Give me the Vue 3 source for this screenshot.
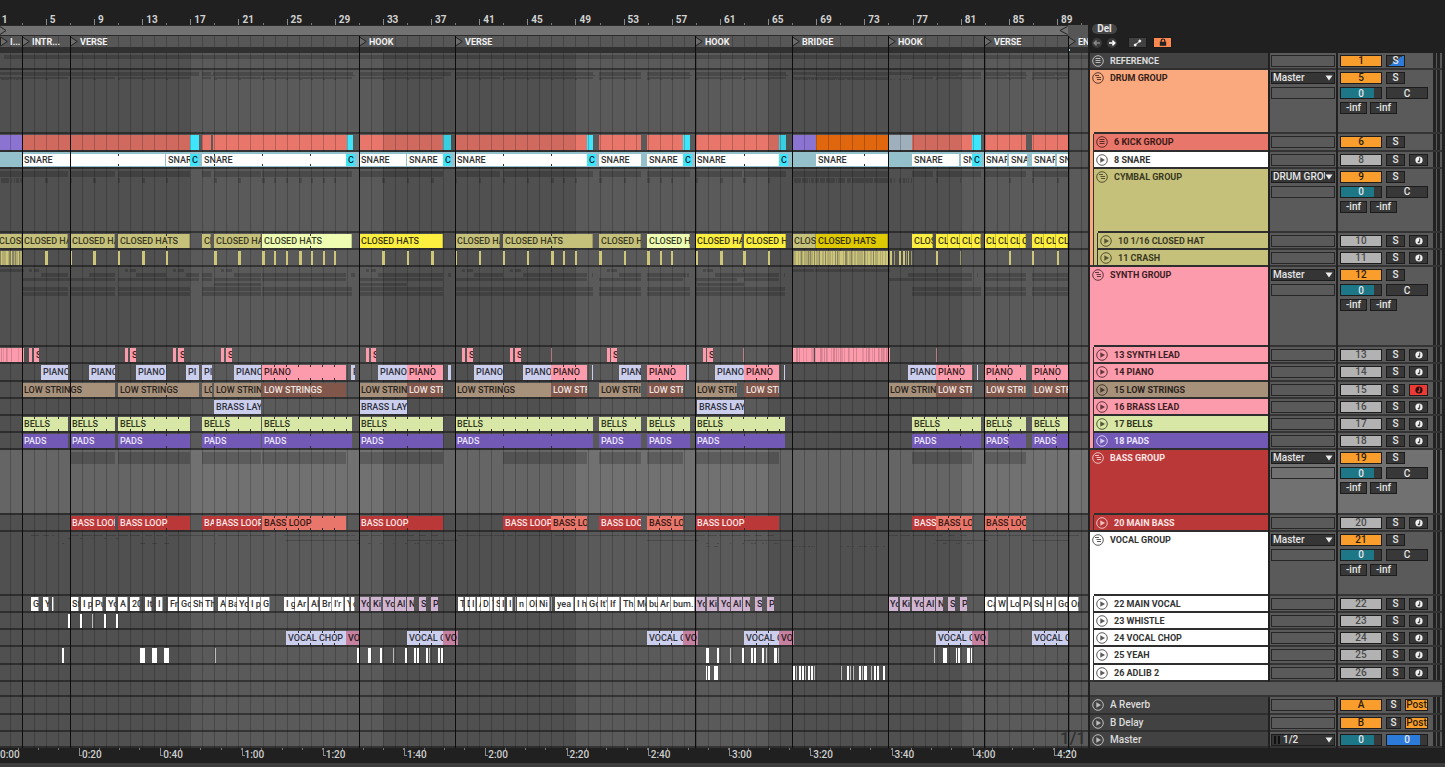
<script setup>
import { ref } from 'vue'

const SPAN = 1088
const BAR = 12.037
const FIRST_BAR = -2.3

const pct = (x) => `${(x / SPAN) * 100}%`
const barX = (n) => FIRST_BAR + (n - 1) * BAR

const gridLines = Array.from({ length: 90 }, (_, i) => barX(i + 2))
const shades = [[0, 190], [382.8, 575.4], [768, 960.6]]
const barNumbers = Array.from({ length: 23 }, (_, i) => 1 + i * 4)
const halfTicks = Array.from({ length: 23 }, (_, i) => barX(3 + i * 4))
const locators = [
  { x: 0, name: 'I...' }, { x: 22, name: 'INTR...' }, { x: 70, name: 'VERSE' },
  { x: 359, name: 'HOOK' }, { x: 455, name: 'VERSE' }, { x: 695, name: 'HOOK' },
  { x: 792, name: 'BRIDGE' }, { x: 888, name: 'HOOK' }, { x: 984, name: 'VERSE' },
  { x: 1068, name: 'EN' },
]
const cuts = locators.slice(1).map((l) => l.x)
const times = ['0:20', '0:40', '1:00', '1:20', '1:40', '2:00', '2:20', '2:40', '3:00', '3:20', '3:40', '4:00', '4:20']
  .map((t, i) => ({ t, x: 79 + i * 81.25 }))
const smallTicks = Array.from({ length: 53 }, (_, i) => 17.6 + i * 20.3)

/* clip helpers: each lane is a list of { a, b, text, tone, marks } */
const LETTER = 5.2
const fit = (text, width) => text.slice(0, Math.max(1, Math.ceil((width - 3) / LETTER)))
const clip = (a, b, tone, text = '', marks = []) => ({
  a, b, tone, text: tone.includes('edge') ? text : fit(text, b - a),
  marks: marks === 'bars'
    ? Array.from({ length: Math.floor((b - a - 3) / BAR) }, (_, i) => a + (i + 1) * BAR)
    : marks,
})
const ticks = (tone, list) => list.map((p) => (Array.isArray(p) ? clip(p[0], p[1], tone) : clip(p, p + 1, `${tone} dim`)))
const noise = (i) => { const v = Math.sin(i * 12.9898) * 43758.5453; return v - Math.floor(v) }
const dense = (a, b, tone, keep) => {
  const out = []
  for (let x = a; x < b; x += 1) {
    const n = noise(x + 1)
    if (n < keep) out.push(clip(x, x + 1, n < keep * 0.45 ? tone : `${tone} dim`))
  }
  return out
}

const kick = [
  clip(0, 22, 'violet'), clip(22, 190, 'coral'), clip(190, 199, 'cyan'), clip(202, 211, 'coral'), clip(213, 347, 'coral'),
  clip(347, 353, 'cyan'), clip(359, 443, 'coral'), clip(443, 451, 'cyan'), clip(455, 587, 'coral'), clip(587, 593, 'cyan'),
  clip(599, 641, 'coral'), clip(647, 683, 'coral'), clip(683, 690, 'cyan'), clip(695, 779, 'coral'), clip(779, 786, 'cyan'),
  clip(792, 816, 'violet'), clip(816, 888, 'orange'), clip(888, 912, 'steel'), clip(912, 972, 'coral'), clip(972, 981, 'cyan'),
  clip(984, 1026, 'coral'), clip(1032, 1068, 'coral'),
]
const snare = [
  ...[[22, 165, [118]], [166, 190], [202, 346, [214, 262, 310]], [359, 406], [407, 443], [455, 587, [503, 551]], [599, 641],
    [647, 683], [695, 779, [744]], [816, 888, [864]], [912, 959], [961, 972], [984, 1007], [1009, 1027], [1032, 1055], [1057, 1068]]
    .map(([a, b, m]) => clip(a, b, 'white', 'SNARE', m)),
  ...[[190, 199], [346, 355], [443, 451], [587, 596], [683, 692], [779, 788], [972, 981]].map(([a, b]) => clip(a, b, 'cyan', 'C')),
]
const hats = [
  [-3, 22, 'olive'], [22, 68, 'olive'], [70, 115, 'olive'], [118, 190, 'olive', [166]], [202, 211, 'olive'], [214, 261, 'olive'],
  [262, 352, 'pale', [310]], [359, 443, 'yellow'], [455, 500, 'olive'], [503, 593, 'olive', [551]], [599, 641, 'olive'],
  [647, 690, 'pale'], [695, 742, 'yellow'], [744, 786, 'yellow'], [792, 816, 'olive'], [816, 888, 'gold'], [912, 933, 'yellow'],
  [936, 948, 'yellow'], [948, 960, 'yellow'], [960, 972, 'yellow'], [972, 981, 'yellow'], [984, 996, 'yellow'], [996, 1008, 'yellow'],
  [1008, 1020, 'yellow'], [1020, 1026, 'yellow'], [1032, 1044, 'yellow'], [1044, 1056, 'yellow'], [1056, 1068, 'yellow'],
].map(([a, b, t, m]) => clip(a, b, `${t} seam`, 'CLOSED HATS', m))
const crash = [
  clip(0, 22, 'straw faint'), ...dense(0, 22, 'straw', 0.75),
  ...[45, 93, 142, 214, 238, 262, 299, 382, 431, 551, 599, 647, 695, 720, 743].map((x) => clip(x, x + 3, 'straw')),
  ...[70, 118, 166, 274, 286, 311, 323, 334, 407, 455, 479, 503, 527, 563, 575, 624, 660, 671, 768, 936, 1009, 1032, 1057].map((x) => clip(x, x + 2, 'straw')),
  clip(792, 888, 'straw faint'), ...dense(792, 888, 'straw', 0.75),
  ...ticks('straw', [[890, 892], 894, [899, 901], [903, 905], 906, [908, 909], 911, 960, 984]),
]
const lead = [
  clip(0, 22, 'pink'), ...dense(0, 22, 'rose', 0.4), clip(23, 24, 'pink'),
  ...[[29, 34, 39], [125, 130, 136], [173, 178, 184], [221, 226, 232], [366, 371, 376], [462, 467, 473], [510, 515, 521], [607, 611, 617], [703, 707, 713]]
    .flatMap(([a, b, e]) => [clip(a, a + 3, 'pink'), clip(b, e, 'pink', 'S')]),
  ...ticks('pink', [551, 743, 936]),
  clip(792, 814, 'pink'), ...dense(792, 814, 'rose', 0.4), clip(815, 888, 'pink'), ...dense(815, 888, 'rose', 0.4), clip(888, 890, 'pink'),
]
const piano = [
  ...[[41, 68], [89, 115], [136, 166], [186, 199], [202, 212], [234, 261], [351, 355], [378, 407], [474, 503], [523, 551], [619, 641], [715, 744], [908, 936]]
    .map(([a, b]) => clip(a, b, 'lavender', 'PIANO')),
  ...[[448, 451], [592, 593], [687, 689], [784, 785], [977, 978]].map(([a, b]) => clip(a, b, 'lavender')),
  ...[[262, 346], [407, 443], [551, 587], [647, 686], [744, 779], [936, 972], [984, 1026], [1032, 1068]].map(([a, b]) => clip(a, b, 'pink', 'PIANO', 'bars')),
]
const strings = [
  ...[[22, 115], [118, 199, [166]], [202, 212], [214, 261], [359, 407], [455, 551, [503]], [599, 641], [695, 737], [888, 936]]
    .map(([a, b, m]) => clip(a, b, 'tan', 'LOW STRINGS', m)),
  ...[[262, 346, [310]], [407, 443], [551, 587], [647, 683], [744, 779], [936, 972], [984, 1026], [1032, 1068]]
    .map(([a, b, m]) => clip(a, b, 'brown', 'LOW STRINGS', m)),
]
const brass = [[214, 261], [359, 407], [697, 744]].map(([a, b]) => clip(a, b, 'lavender', 'BRASS LAYER'))
const held = [
  [22, 68], [70, 115], [118, 190, [166]], [202, 261, [214]], [262, 352, [310]], [359, 443, [407]], [455, 593, [503, 551]],
  [599, 641], [647, 690], [695, 785, [744]], [912, 981, [960]], [984, 1026, [1008]], [1032, 1068, [1056]],
]
const bells = held.map(([a, b]) => clip(a, b, 'lime', 'BELLS', 'bars'))
const pads = held.map(([a, b, m]) => clip(a, b, 'purple', 'PADS', m))
const bass = [
  ...[[70, 115], [118, 190, [166]], [202, 214], [214, 261], [359, 443, [407]], [503, 551], [599, 641], [695, 779, [744]], [912, 936]]
    .map(([a, b, m]) => clip(a, b, 'red', 'BASS LOOP', m)),
  ...[[262, 346], [551, 587], [647, 683], [936, 972], [984, 1026]].map(([a, b]) => clip(a, b, 'coral', 'BASS LOOP', 'bars')),
]
const vocal = [
  ...[[31, 39, 'G'], [43, 49, 'Y'], [52, 54, ''], [70, 79, 'St'], [81, 92, 'I p'], [93, 103, 'Pu'], [106, 116, 'Yo'], [118, 128, 'A'], [130, 140, '20'],
    [145, 152, 'It'], [156, 163, 'I'], [168, 178, 'Fr'], [179, 191, 'Go'], [191, 203, 'Sh'], [203, 214, 'Th'], [218, 226, 'A'], [226, 237, 'Ba'],
    [237, 248, 'Yo'], [249, 261, 'I p'], [261, 270, 'G'], [284, 295, 'I g'], [295, 308, 'Ar'], [309, 319, 'Al'], [320, 332, 'Br'], [332, 344, "I'r"],
    [345, 350, 'Y'], [351, 355, 'c'], [458, 464, 'T'], [465, 470, 'D'], [470, 476, 'I'], [477, 481, 'A'], [481, 490, 'D'], [490, 493, 'T'], [494, 500, 'S'],
    [500, 505, 'I'], [507, 513, 'I'], [515, 516, ''], [517, 527, 'n'], [527, 537, 'Ok'], [537, 550, 'Ni'], [551, 552, ''], [555, 574, 'yea'],
    [575, 587, 'I h'], [587, 598, 'Go'], [598, 608, "It'"], [608, 620, 'If'], [621, 635, 'Th'], [635, 646, 'Mo'], [647, 658, 'bu'], [658, 671, 'Ar'],
    [671, 695, 'bum.'], [985, 995, 'Ca'], [996, 1007, 'W'], [1008, 1020, 'Lo'], [1021, 1031, 'Po'], [1032, 1043, 'Su'], [1044, 1055, 'H'],
    [1056, 1068, 'Go'], [1069, 1079, 'Or']].map(([a, b, t]) => clip(a, b, 'white edge', t)),
  ...[359, 695, 888].flatMap((s) => [[0, 10, 'Yo'], [12, 22, 'Ki'], [24, 35, 'Yo'], [36, 47, 'Al'], [48, 55, 'N'], [60, 67, 'S'], [72, 79, 'P']]
    .map(([a, b, t]) => clip(s + a, s + b, 'lilac', t))),
]
const whistle = ticks('white', [[68, 70], [80, 82], 92, [104, 106], [116, 118]])
const chop = [
  ...[[286, 346], [407, 443], [647, 683], [744, 779], [936, 972], [1032, 1068]].map(([a, b]) => clip(a, b, 'lavender', 'VOCAL CHOP', 'bars')),
  ...[[346, 359], [443, 458], [683, 698], [779, 794], [972, 988]].map(([a, b]) => clip(a, b, 'mauve', 'VO')),
]
const yeah = ticks('white', [
  [62, 64], [140, 145], [152, 157], [164, 169], 215, [357, 359], [368, 371], [380, 382], 393, [405, 407], [414, 416], [417, 419],
  [426, 428], 429, [438, 440], [441, 443], [706, 709], [717, 719], 730, [742, 744], [751, 753], [754, 756], [762, 764], 766,
  [774, 777], 778, 934, [943, 947], [956, 957], [958, 960], [967, 970], [971, 972],
])
const adlib = ticks('white', [
  [706, 707], [708, 710], [714, 718], [793, 795], 796, [799, 801], [802, 804], 805, [808, 810], [811, 813], 814, 841, [847, 849], 850,
  853, [859, 861], 862, [864, 867], 871, [874, 876], [877, 879], [883, 885],
])

/* miniature of the child clips shown inside a folded group lane */
const mini = (list, y, h) => list.map((c) => ({ a: c.a, b: c.b, y, h }))
const crashMini = crash.filter((c) => !c.tone.includes('faint'))
const drumMini = [...mini(kick, 2, 3), ...mini(snare, 5, 1), ...mini(hats, 7, 2), ...mini(crashMini, 9, 1)]
const cymbalMini = [...mini(hats, 2, 6), ...mini(crashMini, 9, 5)]
const synthMini = [
  ...mini(lead.filter((c) => !c.tone.includes('rose')), 2, 3), ...mini(piano, 6, 4), ...mini(strings, 11, 3),
  ...mini(brass, 16, 3), ...mini(bells, 20, 4), ...mini(pads, 25, 4),
]
const bassMini = mini(bass, 2, 12)
const vocalMini = [...mini(vocal, 3, 1), ...mini(whistle, 6, 1), ...mini(chop, 8, 1), ...mini(yeah, 11, 1), ...mini(adlib, 14, 1)]

const tracks = ref([
  { n: '1', name: 'REFERENCE', kind: 'group', icon: 'bars', tone: 'slate', on: true, cue: true, mini: [{ a: 4, b: 1088, y: 2, h: 4 }] },
  { n: '5', name: 'DRUM GROUP', kind: 'group', icon: 'fold', tone: 'peach', size: 'tall', on: true, out: 'Master', mini: drumMini },
  { n: '6', name: '6 KICK GROUP', kind: 'group', icon: 'bars', tone: 'coral', on: true, strips: ['peach'], clips: kick, under: true },
  { n: '8', name: '8 SNARE', icon: 'play', tone: 'white', strips: ['peach'], clips: snare, bed: true },
  { n: '9', name: 'CYMBAL GROUP', kind: 'group', icon: 'fold', tone: 'olive', size: 'tall', on: true, out: 'DRUM GROUP', strips: ['peach'], mini: cymbalMini },
  { n: '10', name: '10 1/16 CLOSED HAT', icon: 'play', tone: 'olive', strips: ['peach', 'olive'], clips: hats },
  { n: '11', name: '11 CRASH', icon: 'play', tone: 'olive', strips: ['peach', 'olive'], last: true, clips: crash },
  { n: '12', name: 'SYNTH GROUP', kind: 'group', icon: 'fold', tone: 'pink', size: 'taller', on: true, out: 'Master', mini: synthMini },
  { n: '13', name: '13 SYNTH LEAD', icon: 'play', tone: 'pink', strips: ['pink'], clips: lead },
  { n: '14', name: '14 PIANO', icon: 'play', tone: 'pink', strips: ['pink'], clips: piano },
  { n: '15', name: '15 LOW STRINGS', icon: 'play', tone: 'tan', strips: ['pink'], clips: strings, armed: true },
  { n: '16', name: '16 BRASS LEAD', icon: 'play', tone: 'pink', strips: ['pink'], clips: brass },
  { n: '17', name: '17 BELLS', icon: 'play', tone: 'lime', strips: ['pink'], clips: bells },
  { n: '18', name: '18 PADS', icon: 'play', tone: 'purple', strips: ['pink'], last: true, clips: pads },
  { n: '19', name: 'BASS GROUP', kind: 'group', icon: 'fold', tone: 'red', size: 'tall', on: true, out: 'Master', mini: bassMini, selected: true },
  { n: '20', name: '20 MAIN BASS', icon: 'play', tone: 'red', strips: ['red'], last: true, clips: bass },
  { n: '21', name: 'VOCAL GROUP', kind: 'group', icon: 'fold', tone: 'white', size: 'tall', on: true, out: 'Master', mini: vocalMini },
  { n: '22', name: '22 MAIN VOCAL', icon: 'play', tone: 'white', strips: ['white'], clips: vocal },
  { n: '23', name: '23 WHISTLE', icon: 'play', tone: 'white', strips: ['white'], clips: whistle },
  { n: '24', name: '24 VOCAL CHOP', icon: 'play', tone: 'white', strips: ['white'], clips: chop },
  { n: '25', name: '25 YEAH', icon: 'play', tone: 'white', strips: ['white'], clips: yeah },
  { n: '26', name: '26 ADLIB 2', icon: 'play', tone: 'white', strips: ['white'], last: true, clips: adlib },
  { kind: 'blank', size: 'short' },
  { n: 'A', name: 'A Reverb', kind: 'return', icon: 'play', tone: 'slate', on: true },
  { n: 'B', name: 'B Delay', kind: 'return', icon: 'play', tone: 'slate', on: true },
  { name: 'Master', kind: 'master', icon: 'play', tone: 'slate', size: 'main', out: '1/2' },
])
</script>

<template>
  <main class="live">
    <header class="top">
      <div class="rulers">
        <div class="bars-ruler">
          <span v-for="n in barNumbers" :key="n" class="bar-no" :style="{ left: pct(barX(n)) }">{{ n }}</span>
          <i v-for="x in halfTicks" :key="x" class="half" :style="{ left: pct(x) }"></i>
        </div>
        <div class="loop">
          <div class="brace" :style="{ width: pct(1068) }">
            <svg width="7" height="9" viewBox="0 0 7 9"><path d="M0 .5 6 4.5 0 8.5" /></svg>
            <svg width="9" height="9" viewBox="0 0 9 9"><path d="M8.5 .5 1 4.5 8.5 8.5" /></svg>
          </div>
        </div>
        <div class="locators">
          <i v-for="x in gridLines" :key="x" class="line" :style="{ left: pct(x) }"></i>
          <div v-for="l in locators" :key="l.x" class="locator" :style="{ left: pct(l.x) }">
            <svg width="8" height="11" viewBox="0 0 8 11"><path d="M.5 1 7.3 5.5 .5 10Z" /></svg>
            <span>{{ l.name }}</span>
          </div>
        </div>
        <div class="scrub"><i class="dot" :style="{ left: pct(1068) }"></i></div>
      </div>
      <div class="tools">
        <button class="pill">Del</button>
        <div class="tool-row">
          <button class="round off" aria-label="Previous locator">
            <svg width="10" height="10" viewBox="0 0 10 10"><path d="M8 5H2.4M4.6 2.6 2.2 5l2.4 2.4" /></svg>
          </button>
          <button class="round" aria-label="Next locator">
            <svg width="10" height="10" viewBox="0 0 10 10"><path d="M2 5h5.6M5.4 2.6 7.8 5 5.4 7.4" /></svg>
          </button>
          <button class="square" aria-label="Automation mode">
            <svg width="9" height="8" viewBox="0 0 9 8"><path d="M2 6 7 2" /><circle cx="2.2" cy="6" r="1" /><circle cx="6.8" cy="2" r="1" /></svg>
          </button>
          <button class="square lock" aria-label="Lock envelopes">
            <svg width="8" height="9" viewBox="0 0 8 9"><path class="shackle" d="M2.2 4V2.8a1.8 1.8 0 0 1 3.6 0V4" /><rect x=".8" y="3.8" width="6.4" height="4" /></svg>
          </button>
        </div>
      </div>
    </header>

    <section class="tracks">
      <div class="field">
        <i v-for="s in shades" :key="s[0]" class="shade" :style="{ left: pct(s[0]), width: pct(s[1] - s[0]) }"></i>
        <i v-for="x in gridLines" :key="x" class="line" :style="{ left: pct(x) }"></i>
      </div>
      <div class="cuts">
        <i v-for="x in cuts" :key="x" :style="{ left: pct(x) }"></i>
        <span class="zoom">1/1</span>
      </div>

      <div v-for="(t, i) in tracks" :key="i" class="track" :class="[t.size || 'normal', t.kind || 'plain', { selected: t.selected }]">
        <div class="lane">
          <div v-if="t.bed" class="bed" :style="{ width: pct(1068) }"></div>
          <i v-for="(m, k) in t.mini || []" :key="'m' + k" class="mini"
            :style="{ left: pct(m.a), width: pct(m.b - m.a), top: m.y + 'px', height: m.h + 'px' }"></i>
          <div v-for="(c, k) in t.clips || []" :key="k" class="clip" :class="[c.tone, { under: t.under, inset: t.bed }]"
            :style="{ left: pct(c.a), width: pct(c.b - c.a) }">
            <span v-if="c.text">{{ c.text }}</span>
            <i v-for="m in c.marks" :key="m" class="mark" :style="{ left: ((m - c.a) / (c.b - c.a)) * 100 + '%' }"></i>
          </div>
        </div>

        <div v-if="t.kind === 'blank'" class="filler"></div>
        <template v-else>
          <div class="head">
            <i v-for="(s, k) in t.strips || []" :key="k" class="strip" :class="[s, { last: t.last }]"></i>
            <div class="title" :class="[t.tone, { open: t.icon === 'fold' }]">
              <svg class="glyph" width="12" height="12" viewBox="0 0 12 12">
                <circle cx="6" cy="6" r="5.3" />
                <path v-if="t.icon === 'play'" class="solid" d="M4.3 3.3 9 6 4.3 8.7Z" />
                <path v-else-if="t.icon === 'bars'" d="M3.5 3.5h5M3.5 5.5h5M3.5 7.5h5" />
                <path v-else d="M3 3.5h4M4.5 5.5h4.5M5 7.5h4" />
              </svg>
              <h2>{{ t.name }}</h2>
            </div>
          </div>

          <div class="io">
            <div v-if="t.out" class="pick">
              <i v-if="t.kind === 'master'" class="pins"></i>
              <select :aria-label="t.name + ' output'"><option>{{ t.out }}</option></select>
              <svg width="8" height="6" viewBox="0 0 8 6"><path d="M.5 .5h7L4 5.5Z" /></svg>
            </div>
            <div v-else class="slot"></div>
            <div v-if="t.out && t.kind !== 'master'" class="slot"></div>
          </div>

          <div class="mix">
            <div class="controls">
              <div v-if="t.kind === 'master'" class="line-row">
                <input class="vol" value="0" aria-label="Master volume">
                <input class="wide cueing" value="0" aria-label="Cue volume">
              </div>
              <div v-else class="line-row">
                <button class="act" :class="{ on: t.on }">{{ t.n }}</button>
                <button class="solo" :class="{ cue: t.cue, slim: t.kind === 'return' }">S</button>
                <button v-if="t.kind === 'return'" class="post">Post</button>
                <button v-else-if="!t.kind" class="arm" :class="{ armed: t.armed }" :aria-label="'Arm ' + t.name">
                  <svg width="8" height="8" viewBox="0 0 8 8"><circle cx="4" cy="4" r="3.6" /><path d="M4.7 1.6v3.6" /><ellipse cx="3.8" cy="5.4" rx="1.1" ry=".9" /></svg>
                </button>
              </div>
              <template v-if="t.out && t.kind !== 'master'">
                <div class="line-row">
                  <input class="vol" value="0" :aria-label="t.name + ' volume'">
                  <input class="wide" value="C" :aria-label="t.name + ' pan'">
                </div>
                <div class="line-row sends">
                  <button class="send">-inf</button>
                  <button class="send">-inf</button>
                </div>
              </template>
            </div>
            <div class="meter"><i></i><i></i></div>
          </div>
        </template>
      </div>
    </section>

    <footer class="time">
      <div class="time-ruler">
        <span class="zero">0:00</span>
        <i v-for="x in smallTicks" :key="x" class="small" :style="{ left: pct(x) }"></i>
        <span v-for="m in times" :key="m.t" class="stamp" :style="{ left: pct(m.x) }">{{ m.t }}</span>
        <i class="dot" :style="{ left: pct(1068) }"></i>
      </div>
    </footer>
  </main>
</template>

<style>
body { background: #202020; }
</style>

<style scoped>
* { box-sizing: border-box; }
.live {
  --line: #343434;
  display: flex;
  flex-direction: column;
  min-height: 100vh;
  background: #202020;
  border-bottom: 4px solid #3d3d3d;
  color: #dedede;
  font: 500 10px/12px Roboto, "Liberation Sans", sans-serif;
  overflow: hidden;
}
button, input, select {
  margin: 0;
  padding: 0;
  border: 1px solid #1c1c1c;
  border-radius: 0;
  background: #383838;
  color: #e6e6e6;
  font: inherit;
  line-height: 10px;
  text-align: center;
  height: 12px;
}
i { display: block; }

.top, .track, .time { display: grid; grid-template-columns: minmax(0, 1fr) 357px; }
.rulers { overflow: hidden; }
.bars-ruler { position: relative; height: 25px; }
.bar-no {
  position: absolute;
  bottom: 0;
  height: 6px;
  padding-left: 3px;
  border-left: 1px solid #8a8a8a;
  line-height: 2px;
  font-size: 10px;
  font-weight: 700;
  color: #d2d2d2;
}
.half { position: absolute; bottom: 0; width: 1px; height: 2px; background: #777; }
.loop { height: 11px; background: #565656; }
.brace {
  display: flex;
  justify-content: space-between;
  align-items: center;
  height: 11px;
  background: #727272;
  border: solid #2a2a2a;
  border-width: 1px 0;
}
.brace svg, .locator svg { display: block; fill: none; stroke: #222; stroke-width: 1; }
.locators { position: relative; height: 11px; background: #575757; }
.locator {
  position: absolute;
  top: 0;
  display: flex;
  gap: 2px;
  height: 11px;
  white-space: nowrap;
  line-height: 12px;
  font-size: 9px;
  font-weight: 700;
  color: #f0f0f0;
}
.locator svg { fill: #6c6c6c; }
.scrub { position: relative; height: 6px; background: #303030; }
.dot { position: absolute; top: 2px; width: 2px; height: 2px; background: #9fe4f5; }

.tools { padding: 24px 0 0 4px; }
.pill { display: block; width: 25px; height: 10px; border: 0; border-radius: 5px; background: #454545; font-weight: 700; }
.tool-row { display: flex; align-items: center; margin-top: 3px; }
.round { width: 10px; height: 10px; border: 0; border-radius: 50%; background: #3a3a3a; margin-right: 5px; }
.square { display: grid; place-items: center; width: 19px; height: 11px; margin-left: 6px; background: #414141; }
.square svg { fill: #fff; stroke: #fff; }
.round svg { display: block; fill: none; stroke: #fff; stroke-width: 1.5; }
.round.off svg { stroke: #888; }
.lock { background: #fd8850; }
.lock svg { fill: #222; stroke: none; }
.lock .shackle { fill: none; stroke: #222; stroke-width: 1.2; }

.tracks { position: relative; display: flex; flex-direction: column; flex: 1; }
.field, .cuts { position: absolute; top: 0; bottom: 0; left: 0; right: 357px; overflow: hidden; pointer-events: none; }
.field { z-index: 1; }
.cuts { z-index: 3; top: -17px; }
.cuts i { position: absolute; top: 0; bottom: 0; width: 1px; background: #0c0c0c; }
.zoom { position: absolute; right: 2px; bottom: 2px; font-size: 17px; line-height: 16px; color: #303030; }
.line { position: absolute; top: 0; bottom: 0; width: 1px; background: rgba(0, 0, 0, .2); }
.shade { position: absolute; top: 0; bottom: 0; background: rgba(0, 0, 0, .1); }

.track { flex: 172 1 0; }
.track.tall { flex-grow: 644; }
.track.taller { flex-grow: 800; }
.track.short { flex-grow: 156; }
.track.main { flex-grow: 164; }
.lane { position: relative; background: #5a5a5a; border-bottom: 2px solid var(--line); overflow: hidden; }
.bed { position: absolute; z-index: 2; inset: 0 auto 0 0; background: #93c0ca; }
.mini { position: absolute; background: rgba(0, 0, 0, .18); }
.clip {
  position: absolute;
  z-index: 2;
  top: 1px;
  bottom: 0;
  display: flex;
  align-items: center;
  overflow: hidden;
  white-space: nowrap;
  font-size: 9px;
  font-weight: 500;
}
.clip.inset { top: 2px; bottom: 1px; }
.clip.under { z-index: 0; }
.clip span { padding-left: 2px; }
.mark { position: absolute; top: 0; bottom: 0; width: 1px; border: solid #2c2c2c; border-width: 2px 0; }
.edge { box-shadow: inset -1px 0 #9a9a9a; }
.seam { box-shadow: inset -1px 0 rgba(0, 0, 0, .2); }
.dim { opacity: .6; }
.faint { opacity: .45; }

.white { background: #fff; color: #333; }
.coral { background: #e8766a; color: #3a1a17; }
.cyan { background: #3fe6fb; color: #123; }
.violet { background: #9b80ea; }
.orange { background: #fa730f; }
.steel { background: #b1c3d2; }
.olive { background: #c5c17b; color: #3a3822; }
.pale { background: #eefdb2; color: #3a3d28; }
.yellow { background: #fdef40; color: #3a3714; }
.gold { background: #dfc900; color: #33300a; }
.straw { background: #cec679; }
.pink { background: #fb9bab; color: #3d1e25; }
.rose { background: #d3808f; }
.lavender { background: #cbcfed; color: #30313c; }
.tan { background: #a7917b; color: #2a231c; }
.brown { background: #80574a; color: #f0e6e2; }
.lime { background: #d9e7a6; color: #303520; }
.purple { background: #7259b6; color: #ebe4fb; }
.red { background: #bb3838; color: #fbe6e6; }
.lilac { background: #cfb5d2; color: #2b222d; }
.mauve { background: #c5819f; color: #2e1b24; }
.peach { background: #faa87e; color: #33211a; }
.slate { background: #424242; color: #dcdcdc; }

.track > .head { display: flex; }
.track:not(.blank) { grid-template-columns: minmax(0, 1fr) 178px 66px 104px; column-gap: 2px; padding-right: 3px; }
.track.blank { padding-right: 3px; column-gap: 2px; grid-template-columns: minmax(0, 1fr) 352px; }
.lane, .head, .io, .mix, .filler { min-width: 0; }
.io, .mix, .filler { background: #5a5a5a; border-bottom: 2px solid var(--line); }
.selected .lane, .selected .io, .selected .mix { background: #717171; }
.head { background: var(--line); }
.strip { width: 4px; border-right: 1px solid #333; }
.strip.last { border-bottom: 2px solid #333; }
.title { position: relative; flex: 1; display: flex; align-items: flex-start; gap: 6px; padding: 2px 0 0 2px; }
.title::after { content: ""; position: absolute; left: 0; right: 0; bottom: 0; height: 2px; background: #2e2e2e; }
.title.open::after { left: 4px; }
.title h2 { margin: 0; font-size: 9px; line-height: 12px; font-weight: 700; white-space: nowrap; }
.return h2, .master h2 { font-size: 10px; font-weight: 500; }
.glyph { display: block; flex: none; fill: none; stroke: currentColor; stroke-width: 1; opacity: .8; }
.glyph .solid { fill: currentColor; stroke: none; }

.io { display: flex; flex-direction: column; gap: 3px; padding: 2px 1px 0; }
.slot { height: 12px; border: 1px solid #262626; }
.pick { position: relative; display: flex; height: 12px; border: 1px solid #1c1c1c; background: #353535; }
.pick select { flex: 1; min-width: 0; height: 10px; padding-left: 1px; border: 0; background: none; appearance: none; text-align: left; overflow: hidden; }
.pick svg { flex: none; width: 8px; margin: 2px 1px 0 0; fill: #eee; }
.pins { width: 6px; margin: 1px 2px; border: solid #111; border-width: 0 2px; }

.mix { display: flex; justify-content: space-between; padding: 0 2px; }
.controls { display: flex; flex-direction: column; gap: 3px; padding-top: 2px; }
.line-row { display: flex; gap: 4px; }
.sends { gap: 3px; }
.act { width: 42px; background: #b2b2b2; color: #4a4a4a; }
.act.on { background: #f99d2c; color: #2a1c08; }
.solo, .arm { width: 19px; }
.solo.slim { width: 15px; }
.solo.cue { background: linear-gradient(145deg, #383838 50%, #2d7bd8 50%); }
.arm { display: grid; place-items: center; }
.arm svg { fill: #f2f2f2; }
.arm path { stroke: #333; stroke-width: 1; }
.arm ellipse { fill: #333; }
.arm.armed { background: #ee3a35; }
.arm.armed svg { fill: #2a1010; }
.arm.armed path { stroke: #ee3a35; }
.arm.armed ellipse { fill: #ee3a35; }
.post { width: 23px; background: #f99d2c; color: #2a1c08; }
.vol { width: 42px; background: linear-gradient(90deg, #1e7787 83%, #383838 83%); }
.wide { width: 42px; }
.cueing { background: linear-gradient(90deg, #2d7bd8 83%, #383838 83%); }
.send { width: 27px; }
.meter { display: flex; gap: 1px; }
.meter i { width: 3px; background: #222; }

.time-ruler { position: relative; height: 15px; overflow: hidden; color: #cfcfcf; line-height: 14px; }
.zero { display: block; }
.stamp { position: absolute; top: 0; padding-left: 3px; }
.stamp::before { content: ""; position: absolute; left: 0; top: 0; width: 2px; height: 7px; border: solid #8a8a8a; border-width: 0 0 1px 1px; }
.small { position: absolute; top: 0; width: 1px; height: 2px; background: #777; }
</style>
